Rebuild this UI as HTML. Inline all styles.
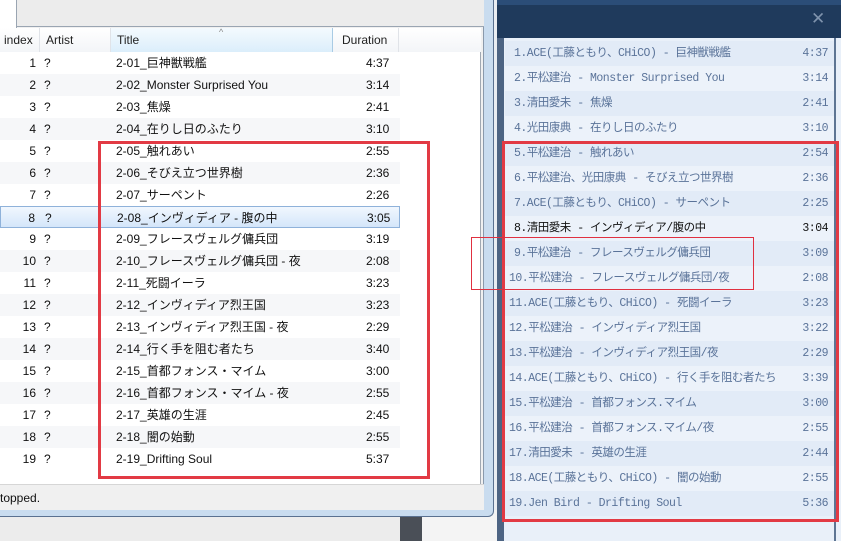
<!DOCTYPE html>
<html><head><meta charset="utf-8"><style>
*{margin:0;padding:0;box-sizing:border-box}
body{width:841px;height:541px;overflow:hidden;position:relative;background:#e9edf2;font-family:"Liberation Sans","Noto Sans CJK JP",sans-serif}
.abs{position:absolute}
#bg1{left:0;top:510px;width:400px;height:31px;background:#ececec}
#bg2{left:400px;top:510px;width:22px;height:31px;background:#4a4f57}
#bg3{left:422px;top:510px;width:75px;height:31px;background:#f4f4f4}
#win{left:0;top:0;width:494px;height:517px;background:#c9dcef;border:1px solid #5a7190;border-left:none;border-top:none;border-radius:0 0 6px 0}
#inner{left:0;top:0;width:484px;height:510px;background:#f0f0f0;border-right:1px solid #8a99ab}
#tabs{left:0;top:0;width:484px;height:27px;background:#ececec;border-bottom:1px solid #9aa5b2}
#tab{left:0;top:0;width:17px;height:28px;background:#fff;border-right:1px solid #9aa5b2}
#list{left:0;top:28px;width:481px;height:456px;background:#fff;border-right:1px solid #a0a8b2}
.hd{position:absolute;top:0;height:24px;line-height:24px;font-size:12px;color:#222;border-right:1px solid #e0e3e8;background:linear-gradient(#fff,#f3f5f8)}
.row{position:absolute;left:0;width:400px;height:22px;font-size:12px;line-height:23px;color:#111}
.row span{position:absolute}
.alt{background:#f6f7f9}
#status{left:0;top:484px;width:484px;height:26px;background:#f0f0f0;border-top:1px solid #d6d6d6;font-size:12px;line-height:26px;color:#111}
#rp{left:497px;top:0;width:344px;height:541px;background:#e9f0f9}
#rtop{left:497px;top:0;width:344px;height:38px;background:#1f3a5c;border-top:5px solid #2b4d78}
#rstrip{left:497px;top:38px;width:7px;height:503px;background:#4d6483}
#rline{left:834px;top:38px;width:2px;height:503px;background:#5e7593}
.rr{position:absolute;left:505px;width:329px;height:25px;line-height:25px;font-family:"Liberation Mono","Noto Sans CJK JP",monospace;font-size:11.5px;color:#5a7399;letter-spacing:-0.5px}
.rr b{font-weight:normal;position:absolute;right:6px}
.rr i{font-style:normal;position:absolute;left:9px;white-space:nowrap}
.ra{background:#e2ebf7}.rb{background:#ecf2fa}
.red{position:absolute;border:3px solid #e23a44}
</style></head><body>
<div class="abs" id="bg1"></div><div class="abs" id="bg2"></div><div class="abs" id="bg3"></div>
<div class="abs" id="win"></div>
<div class="abs" id="inner"></div>
<div class="abs" id="tabs"></div><div class="abs" id="tab"></div>
<div class="abs" id="list">
<div class="hd" style="left:0;width:40px;padding-left:4px">index</div>
<div class="hd" style="left:40px;width:71px;padding-left:6px">Artist</div>
<div class="hd" style="left:111px;width:222px;padding-left:6px;background:linear-gradient(#f4fafe,#dbeefb);border-right:1px solid #a9cbe4">Title<span style="position:absolute;left:108px;top:-8px;font-size:9px;color:#888">^</span></div>
<div class="hd" style="left:333px;width:66px;padding-left:9px">Duration</div>
<div class="hd" style="left:399px;width:82px;border-right:none"></div>
</div>
<div class="abs" id="rows" style="left:0;top:52px">
</div>
<div class="abs" id="status">topped.</div>
<div class="abs" id="rp"></div><div class="abs" id="rtop"></div>
<div class="abs" style="left:811px;top:9px;color:#7f93ad;font-size:17px">✕</div>
<div class="abs" id="rstrip"></div><div class="abs" id="rline"></div>
<div id="rrows"></div>
<div class="red" style="left:98px;top:141px;width:332px;height:338px"></div>
<div class="red" style="left:502px;top:141px;width:337px;height:381px"></div>
<div class="abs" style="left:471px;top:237px;width:283px;height:53px;border:1px solid #e03040"></div>
<script>
var L=[["2-01_巨神獣戦艦","4:37"],["2-02_Monster Surprised You","3:14"],["2-03_焦燥","2:41"],["2-04_在りし日のふたり","3:10"],["2-05_触れあい","2:55"],["2-06_そびえ立つ世界樹","2:36"],["2-07_サーペント","2:26"],["2-08_インヴィディア - 腹の中","3:05"],["2-09_フレースヴェルグ傭兵団","3:19"],["2-10_フレースヴェルグ傭兵団 - 夜","2:08"],["2-11_死闘イーラ","3:23"],["2-12_インヴィディア烈王国","3:23"],["2-13_インヴィディア烈王国 - 夜","2:29"],["2-14_行く手を阻む者たち","3:40"],["2-15_首都フォンス・マイム","3:00"],["2-16_首都フォンス・マイム - 夜","2:55"],["2-17_英雄の生涯","2:45"],["2-18_闇の始動","2:55"],["2-19_Drifting Soul","5:37"]];
var h="";L.forEach(function(r,i){var n=i+1;var st=(n==8)?"background:linear-gradient(#f1f7fe,#d4e6fa);border:1px solid #8fb2da;left:0;":"";
h+='<div class="row'+(i%2?' alt':'')+'" style="top:'+(52+i*22)+'px;'+st+'"><span style="right:364px">'+n+'</span><span style="left:44px">?</span><span style="left:116px">'+r[0]+'</span><span style="left:366px">'+r[1]+'</span></div>';});
document.getElementById("rows").outerHTML=h;
var R=[["ACE(工藤ともり、CHiCO) - 巨神獣戦艦","4:37"],["平松建治 - Monster Surprised You","3:14"],["清田愛未 - 焦燥","2:41"],["光田康典 - 在りし日のふたり","3:10"],["平松建治 - 触れあい","2:54"],["平松建治、光田康典 - そびえ立つ世界樹","2:36"],["ACE(工藤ともり、CHiCO) - サーペント","2:25"],["清田愛未 - インヴィディア/腹の中","3:04"],["平松建治 - フレースヴェルグ傭兵団","3:09"],["平松建治 - フレースヴェルグ傭兵団/夜","2:08"],["ACE(工藤ともり、CHiCO) - 死闘イーラ","3:23"],["平松建治 - インヴィディア烈王国","3:22"],["平松建治 - インヴィディア烈王国/夜","2:29"],["ACE(工藤ともり、CHiCO) - 行く手を阻む者たち","3:39"],["平松建治 - 首都フォンス.マイム","3:00"],["平松建治 - 首都フォンス.マイム/夜","2:55"],["清田愛未 - 英雄の生涯","2:44"],["ACE(工藤ともり、CHiCO) - 闇の始動","2:55"],["Jen Bird - Drifting Soul","5:36"]];
var g="";R.forEach(function(r,i){var n=i+1;g+='<div class="rr '+(i%2?'rb':'ra')+'" style="top:'+(41+i*25)+'px;'+(n==8?'color:#111;':'')+'"><i'+(n>=10?' style="left:4px"':'')+'>'+n+'.'+r[0]+'</i><b>'+r[1]+'</b></div>';});
document.getElementById("rrows").innerHTML=g;
</script>
</body></html>
